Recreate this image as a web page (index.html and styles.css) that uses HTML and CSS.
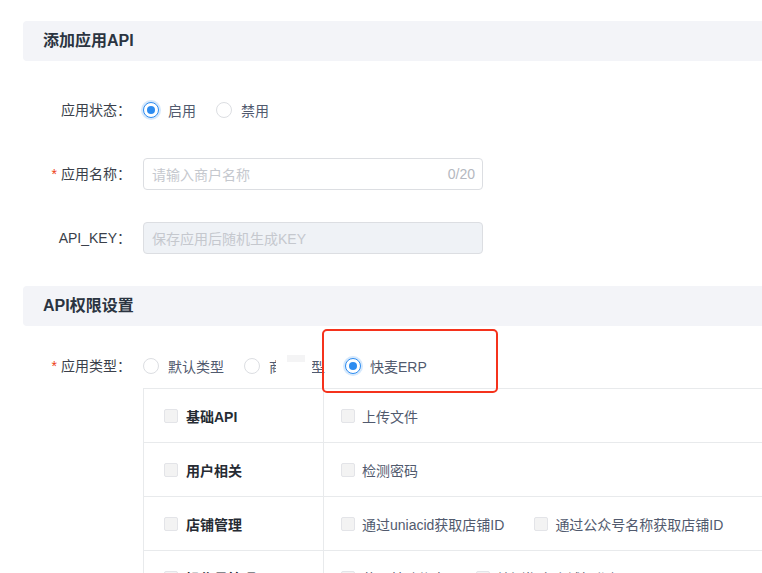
FILE: index.html
```html
<!DOCTYPE html>
<html>
<head>
    <title>添加应用API</title>
    <meta charset="UTF-8">
    <link rel="stylesheet" href="styles.css">
</head>
<body>
    <div class="page">
        <div class="section-title">添加应用API</div>
        <form class="form">
            <div class="form-item">
                <label class="form-label">应用状态：</label>
                <div class="form-content">
                    <span class="radio checked"></span><span class="radio-text">启用</span>
                    <span class="radio"></span><span class="radio-text">禁用</span>
                </div>
            </div>
            <div class="form-item">
                <label class="form-label"><span class="required">*</span>应用名称：</label>
                <div class="form-content">
                    <div class="input">
                        <span class="placeholder">请输入商户名称</span>
                        <span class="count">0/20</span>
                    </div>
                </div>
            </div>
            <div class="form-item">
                <label class="form-label">API_KEY：</label>
                <div class="form-content">
                    <div class="input disabled">
                        <span class="placeholder">保存应用后随机生成KEY</span>
                    </div>
                </div>
            </div>
        </form>

        <div class="section-title second">API权限设置</div>
        <div class="form-item type-item">
            <label class="form-label"><span class="required">*</span>应用类型：</label>
            <div class="form-content column">
                <div class="radio-row">
                    <span class="radio"></span><span class="radio-text">默认类型</span>
                    <span class="radio"></span><span class="radio-text">商户类型</span>
                    <span class="radio checked"></span><span class="radio-text">快麦ERP</span>
                </div>
                <div class="perm-table">
                    <div class="perm-row">
                        <div class="perm-group"><span class="checkbox"></span>基础API</div>
                        <div class="perm-items">
                            <span class="perm-item"><span class="checkbox"></span>上传文件</span>
                        </div>
                    </div>
                    <div class="perm-row">
                        <div class="perm-group"><span class="checkbox"></span>用户相关</div>
                        <div class="perm-items">
                            <span class="perm-item"><span class="checkbox"></span>检测密码</span>
                        </div>
                    </div>
                    <div class="perm-row">
                        <div class="perm-group"><span class="checkbox"></span>店铺管理</div>
                        <div class="perm-items">
                            <span class="perm-item"><span class="checkbox"></span>通过uniacid获取店铺ID</span>
                            <span class="perm-item"><span class="checkbox"></span>通过公众号名称获取店铺ID</span>
                        </div>
                    </div>
                    <div class="perm-row">
                        <div class="perm-group"><span class="checkbox"></span>操作员管理</div>
                        <div class="perm-items">
                            <span class="perm-item"><span class="checkbox"></span>获取基础信息</span>
                            <span class="perm-item"><span class="checkbox"></span>检测指定店铺操作权限</span>
                        </div>
                    </div>
                </div>
            </div>
            <div class="blot"></div>
            <div class="highlight"></div>
        </div>
    </div>
</body>
</html>
```

FILE: styles.css
```css
body {
    margin: 0;
    padding: 0;
    background-color: #fff;
    overflow: hidden;
    font-family: "Liberation Sans", "Noto Sans CJK SC", sans-serif;
    font-size: 14px;
    color: #515a6e;
}
.page {
    padding: 21px 0 0 23px;
    width: 760px;
}
.section-title {
    height: 40px;
    line-height: 40px;
    padding-left: 20px;
    background-color: #f3f4f8;
    border-radius: 4px 0 0 4px;
    font-size: 16px;
    font-weight: bold;
    color: #2b3441;
    margin-bottom: 33px;
}
.section-title.second {
    margin-bottom: 24px;
}
.form-item {
    display: flex;
    margin-bottom: 32px;
}
.form-label {
    width: 120px;
    box-sizing: border-box;
    padding-right: 12px;
    height: 32px;
    line-height: 32px;
    text-align: right;
    color: #3a3f4a;
    flex-shrink: 0;
}
.required {
    color: #ed4014;
    margin-right: 4px;
    font-family: "Liberation Sans", sans-serif;
}
.form-content {
    display: flex;
    align-items: center;
    height: 32px;
    flex: 1;
}
.form-content.column {
    flex-direction: column;
    align-items: stretch;
    height: auto;
}
.radio-row {
    display: flex;
    align-items: center;
    height: 32px;
}
.radio {
    width: 16px;
    height: 16px;
    box-sizing: border-box;
    border: 1px solid #dcdee2;
    border-radius: 50%;
    background-color: #fff;
    position: relative;
    flex-shrink: 0;
}
.radio.checked {
    border-color: #2d8cf0;
    box-shadow: 0 0 0 2px rgba(45,140,240,0.2);
}
.radio.checked::after {
    content: "";
    position: absolute;
    left: 3px;
    top: 3px;
    width: 8px;
    height: 8px;
    border-radius: 50%;
    background-color: #2d8cf0;
}
.radio-text {
    margin-left: 9px;
    margin-right: 20px;
    color: #515a6e;
}
.input {
    width: 340px;
    height: 32px;
    box-sizing: border-box;
    border: 1px solid #dcdee2;
    border-radius: 4px;
    padding: 0 7px 0 8px;
    display: flex;
    align-items: center;
    justify-content: space-between;
}
.input.disabled {
    background-color: #eff2f6;
}
.placeholder {
    color: #c5c8ce;
}
.count {
    color: #b4b8c0;
}
.type-item {
    position: relative;
}
.perm-table {
    margin-top: 6px;
    border-top: 1px solid #e8eaec;
    border-left: 1px solid #e8eaec;
}
.perm-row {
    display: flex;
    height: 53px;
    border-bottom: 1px solid #e8eaec;
}
.perm-group {
    width: 180px;
    flex-shrink: 0;
    border-right: 1px solid #e8eaec;
    display: flex;
    align-items: center;
    padding-left: 20px;
    box-sizing: border-box;
    font-weight: bold;
    color: #262b33;
}
.perm-items {
    display: flex;
    align-items: center;
    padding-left: 17px;
}
.perm-item {
    display: flex;
    align-items: center;
    margin-right: 30px;
    white-space: nowrap;
}
.checkbox {
    width: 14px;
    height: 14px;
    box-sizing: border-box;
    border: 1px solid #e3e4e8;
    border-radius: 2px;
    background-color: #f3f3f3;
    margin-right: 7px;
    flex-shrink: 0;
}
.perm-group .checkbox {
    margin-right: 8px;
}
.blot {
    position: absolute;
    left: 253px;
    top: 5px;
    width: 36px;
    height: 30px;
    background-color: #fff;
    border-radius: 4px 4px 14px 14px;
}
.blot::before {
    content: "";
    position: absolute;
    left: 11px;
    top: 0;
    width: 18px;
    height: 7px;
    background-color: #f4f4f5;
}
.highlight {
    position: absolute;
    left: 299px;
    top: -21px;
    width: 176px;
    height: 64px;
    box-sizing: border-box;
    border: 2px solid #f5321c;
    border-radius: 5px;
}
```
